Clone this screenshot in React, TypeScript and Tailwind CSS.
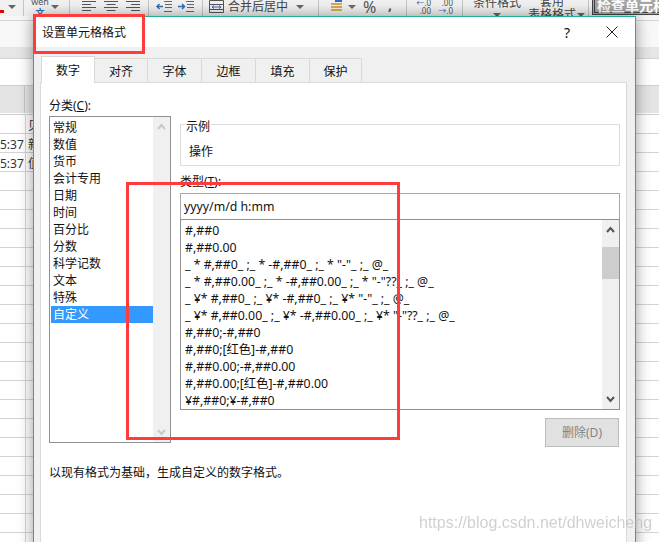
const font = { fontFamily: '"Noto Sans", "Noto Sans CJK SC", sans-serif' };

const categories = ["常规", "数值", "货币", "会计专用", "日期", "时间", "百分比", "分数", "科学记数", "文本", "特殊", "自定义"];
const formats = [
  "#,##0",
  "#,##0.00",
  '_ * #,##0_ ;_ * -#,##0_ ;_ * "-"_ ;_ @_',
  '_ * #,##0.00_ ;_ * -#,##0.00_ ;_ * "-"??_ ;_ @_',
  '_ ¥* #,##0_ ;_ ¥* -#,##0_ ;_ ¥* "-"_ ;_ @_',
  '_ ¥* #,##0.00_ ;_ ¥* -#,##0.00_ ;_ ¥* "-"??_ ;_ @_',
  "#,##0;-#,##0",
  "#,##0;[红色]-#,##0",
  "#,##0.00;-#,##0.00",
  "#,##0.00;[红色]-#,##0.00",
  "¥#,##0;¥-#,##0",
];
const tabs = [
  { name: "对齐", w: "w-[53px]" },
  { name: "字体", w: "w-[54px]" },
  { name: "边框", w: "w-[54px]" },
  { name: "填充", w: "w-[54px]" },
  { name: "保护", w: "w-[52px]" },
];

const Chevron = ({ up, color }: { up?: boolean; color: string }) => (
  <svg width="9" height="7" viewBox="0 0 9 7" fill="none" stroke={color} strokeWidth="2">
    <path d={up ? "M1 6l3.5-4L8 6" : "M1 1l3.5 4L8 1"} />
  </svg>
);

const Caret = () => <div className="w-0 h-0 border-x-[4px] border-x-transparent border-t-[4px] border-t-[#666]" />;
const Sep = () => <div className="w-px h-[16px] bg-[#c6c6c6]" />;

const Lines = ({ kind }: { kind: "l" | "c" | "r" }) => (
  <svg width="14" height="14" viewBox="0 0 14 14" stroke="#555" strokeWidth="1">
    <path d="M0 .5h14" />
    <path d={kind === "l" ? "M0 3.5h9" : kind === "c" ? "M2.500 3.500h9" : "M5 3.500h9"} />
    <path d="M0 6.500h14" />
    <path d={kind === "l" ? "M0 9.500h9" : kind === "c" ? "M2.500 9.500h9" : "M5 9.500h9"} />
  </svg>
);

const Indent = ({ right }: { right?: boolean }) => (
  <svg width="16" height="13" viewBox="0 0 16 13" fill="none" strokeWidth="1">
    <path d="M8 .5h8M9 3.500h7M9 6.500h7M8 10.500h8" stroke="#666" />
    <path d={right ? "M0 5.500h6M4 3l2.500 2.500L4 8" : "M7 5.500H1M3.500 3L1 5.500 3.500 8"} stroke="#2f6fb5" strokeWidth="1.500" />
  </svg>
);

function Ribbon() {
  return (
    <div className="flex h-[16px] shrink-0 items-start overflow-hidden bg-[#f1f1f1] text-[#444] text-[12px] [&>*]:shrink-0" style={font}>
      <div className="mt-[10px] w-[4px] h-[3px] bg-[#e00000]" />
      <div className="ml-[4px] mt-[5px]"><Caret /></div>
      <div className="ml-[7px]"><Sep /></div>
      <div className="ml-[6px] flex flex-col items-center w-[20px] -mt-[4px] leading-[11px] text-[9px] text-[#555]">
        <span>wén</span>
        <span className="text-[#2f6fb5] font-bold">文</span>
      </div>
      <div className="ml-[1px] mt-[5px]"><Caret /></div>
      <div className="ml-[10px]"><Sep /></div>
      <div className="ml-[12px] mt-[1px] flex gap-[8px]">
        <Lines kind="l" />
        <Lines kind="c" />
        <Lines kind="r" />
      </div>
      <div className="ml-[8px]"><Sep /></div>
      <div className="ml-[7px] mt-[1px] flex gap-[6px]">
        <Indent />
        <Indent right />
      </div>
      <div className="ml-[8px]"><Sep /></div>
      <svg className="ml-[6px]" width="15" height="13" viewBox="0 0 15 13" fill="none" stroke="#555">
        <path d="M.5.500h14v12H.5zM.5 4.500h14M.5 9.500h14" />
        <path d="M3 7h9M3 7l2-1.500M3 7l2 1.500M12 7l-2-1.500M12 7l-2 1.500" stroke="#2f6fb5" />
      </svg>
      <span className="ml-[4px] -mt-[2px] w-[60px] leading-[18px] text-[12px] whitespace-nowrap">合并后居中</span>
      <div className="ml-[8px] mt-[5px]"><Caret /></div>
      <div className="ml-[14px]"><Sep /></div>
      <svg className="ml-[11px]" width="13" height="13" viewBox="0 0 13 13" fill="none">
        <path d="M1 4h11M1 7h11M1 10h11" stroke="#dba850" strokeWidth="2" />
        <path d="M5 1h7" stroke="#2f6fb5" strokeWidth="2" />
      </svg>
      <div className="ml-[5px] mt-[5px]"><Caret /></div>
      <span className="ml-[7px] -mt-[1px] w-[14px] leading-[16px] text-[16px] text-[#555]">%</span>
      <span className="ml-[11px] -mt-[3px] w-[4px] leading-[16px] text-[14px] font-bold text-[#555]">,</span>
      <div className="ml-[14px]"><Sep /></div>
      <div className="ml-[8px] -mt-[1px] flex gap-[6px] text-[8px] leading-[8px] text-[#555]">
        <div className="flex flex-col items-end w-[16px]"><span><span className="text-[#2f6fb5]">←</span>.0</span><span>.00</span></div>
        <div className="flex flex-col items-end w-[16px]"><span>.00</span><span><span className="text-[#2f6fb5]">→</span>.0</span></div>
      </div>
      <div className="ml-[9px]"><Sep /></div>
      <div className="ml-[10px] w-[48px] flex flex-col items-center -mt-[4px] leading-[13px] whitespace-nowrap">
        <span>条件格式</span>
        <div className="mt-[4px]"><Caret /></div>
      </div>
      <div className="ml-[6px] w-[50px] flex flex-col items-center -mt-[5px] leading-[14px] whitespace-nowrap">
        <span>套用</span>
        <span className="-mt-[1px]">表格格式</span>
      </div>
      <div className="mt-[13px]"><Caret /></div>
      <div className="ml-[3px]"><Sep /></div>
      <div className="ml-[3px] -mt-[3px] w-[80px] h-[18px] border-[3px] border-double border-[#444] bg-[#a5a5a5] text-white text-[14px] font-bold leading-[12px] whitespace-nowrap px-[2px]">检查单元格</div>
    </div>
  );
}

function Sheet() {
  const rows = Array.from({ length: 23 });
  return (
    <div className="flex flex-col h-[542px] overflow-hidden bg-white text-[12px] text-[#333] [&>*]:shrink-0" style={font}>
      <Ribbon />
      <div className="h-[4px] bg-[#f7f7f7]" />
      <div className="h-[27px] bg-[#f8f8f8] border-t border-[#d4d4d4]" />
      <div className="h-[11px] bg-[#e6e6e6]" />
      <div className="h-[27px] bg-white border-t border-[#d4d4d4]" />
      <div className="h-[28px] bg-[#e4e4e4] border-t border-[#cfcfcf] flex">
        <div className="w-[25px] border-r border-[#c8c8c8]" />
      </div>
      <div className="h-[2px] border-b border-[#cfcfcf]" />
      {rows.map((_, i) => (
        <div key={i} className="h-[19px] flex border-b border-[#d4d4d4] leading-[21px] overflow-hidden">
          <div className="w-[26px] shrink-0 border-r border-[#d4d4d4] text-right overflow-hidden pr-[4px]">
            {i === 1 || i === 2 ? "5:37" : ""}
          </div>
          <span className="ml-[2px]">{i === 0 ? "贝" : i === 1 ? "新" : i === 2 ? "值" : ""}</span>
        </div>
      ))}
    </div>
  );
}

function Dialog() {
  return (
    <div
      className="absolute left-[33px] top-[16px] w-[603px] h-[540px] flex flex-col bg-[#f0f0f0] border border-[#1fae96] shadow-[0_0_14px_rgba(0,0,0,0.4)] text-[12px] leading-[17px] text-[#111]"
      style={font}
    >
      <div className="h-[30px] shrink-0 bg-white flex items-center pl-[8px]">
        <span className="grow">设置单元格格式</span>
        <span className="w-[12px] text-[14px] text-center">?</span>
        <svg className="ml-[33px] mr-[17px]" width="12" height="12" viewBox="0 0 12 12" stroke="#222" fill="none">
          <path d="M.5.500l11 11M11.500.500l-11 11" />
        </svg>
      </div>

      <div className="flex h-[26px] shrink-0 ml-[7px] mt-[10px] items-end relative z-10 -mb-px">
        <div className="w-[54px] h-[27px] pt-px bg-white border border-b-0 border-[#d9d9d9] flex items-center justify-center">数字</div>
        {tabs.map((t) => (
          <div key={t.name} className={`${t.w} h-[25px] pt-px border border-l-0 border-[#d9d9d9] flex items-center justify-center`}>{t.name}</div>
        ))}
      </div>

      <div className="ml-[6px] w-[587px] grow bg-white border border-[#d9d9d9] flex flex-col">
        <div className="flex">
          <div className="ml-[8px] w-[122px] shrink-0">
            <div className="mt-[14px] h-[17px]">分类(<span className="underline">C</span>):</div>
            <div className="mt-[2px] h-[327px] border border-[#8f8f94] flex">
              <div className="grow pt-[2px] pl-[1px]">
                {categories.map((c) =>
                  c === "自定义" ? (
                    <div key={c} className="h-[17px] pl-[2px] bg-[#3399ff] text-white">{c}</div>
                  ) : (
                    <div key={c} className="h-[17px] pl-[2px]">{c}</div>
                  )
                )}
              </div>
              <div className="w-[17px] shrink-0 bg-[#f0f0f0] flex flex-col items-center justify-between py-[6px]">
                <Chevron up color="#c8c8c8" />
                <Chevron color="#c8c8c8" />
              </div>
            </div>
          </div>

          <div className="ml-[9px] w-[440px] shrink-0 flex flex-col">
            <div className="relative mt-[41px] h-[42px] border border-[#dcdcdc] pl-[8px] pt-[18px]">
              <span className="absolute left-[4px] -top-[7px] px-px bg-white">示例</span>
              操作
            </div>
            <div className="mt-[7px] h-[17px]">类型(<span className="underline">T</span>):</div>
            <div className="mt-[3px] h-[27px] border border-[#a9a9a9] pl-[3px] text-[12.3px] leading-[25px]">yyyy/m/d h:mm</div>
            <div className="-mt-px h-[191px] border border-[#8f8f94] flex overflow-hidden">
              <div className="grow pt-[2px] pl-[4px] text-[12.3px] whitespace-nowrap overflow-hidden">
                {formats.map((f) => (
                  <div key={f} className="h-[17px]">{f}</div>
                ))}
              </div>
              <div className="w-[17px] shrink-0 bg-[#f0f0f0] flex flex-col items-center py-[6px]">
                <Chevron up color="#555" />
                <div className="mt-[14px] w-full h-[32px] bg-[#cdcdcd]" />
                <div className="mt-auto"><Chevron color="#555" /></div>
              </div>
            </div>
            <button className="self-end mt-[8px] mr-px w-[74px] h-[29px] bg-[#e1e1e1] border border-[#bcbcbc] text-[#838383]">删除(D)</button>
          </div>
        </div>
        <div className="ml-[8px] mt-[17px]">以现有格式为基础，生成自定义的数字格式。</div>
      </div>
    </div>
  );
}

export default function App() {
  return (
    <div className="relative w-[659px] h-[542px] overflow-hidden">
      <Sheet />
      <Dialog />
      {/* annotation boxes drawn over the screenshot */}
      <div className="absolute left-[33px] top-[14px] w-[112px] h-[40px] border-[3px] border-[#ff3b3b]" />
      <div className="absolute left-[126px] top-[182px] w-[274px] h-[258px] border-[3px] border-[#ff3b3b]" />
      <div
        className="absolute left-[419px] top-[513px] text-[16px] leading-[20px] text-[#bdbdbd] opacity-70 blur-[0.4px] whitespace-nowrap"
        style={{ fontFamily: '"Liberation Sans", sans-serif' }}
      >
        https://blog.csdn.net/dhweicheng
      </div>
    </div>
  );
}
